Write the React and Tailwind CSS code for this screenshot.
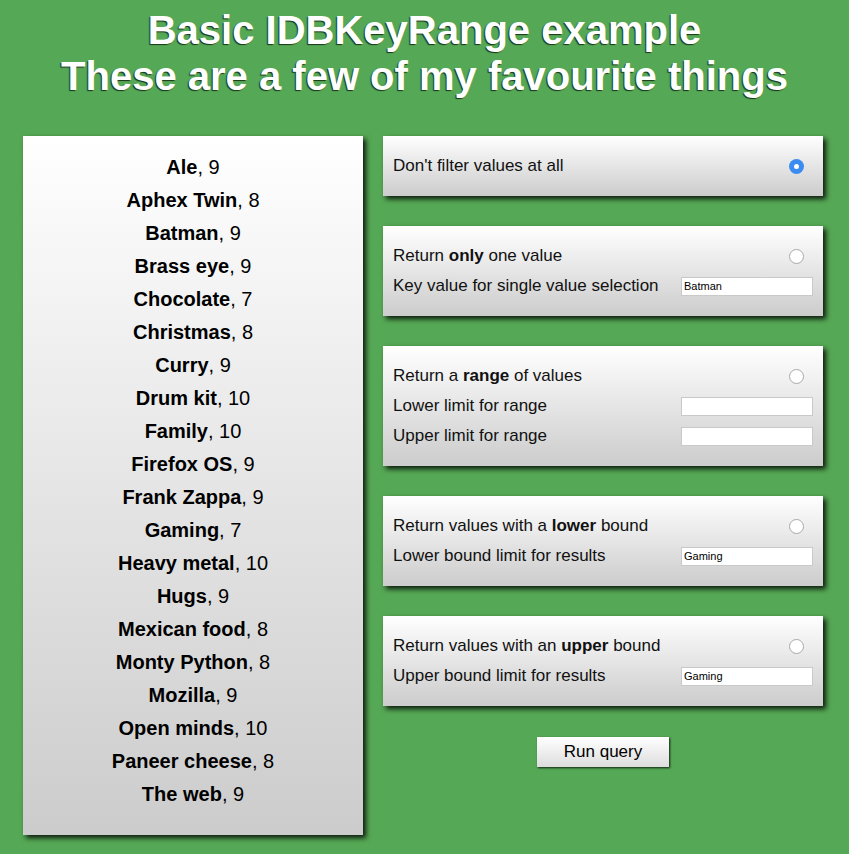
import React from "react";

const things = [
  ["Ale", 9],
  ["Aphex Twin", 8],
  ["Batman", 9],
  ["Brass eye", 9],
  ["Chocolate", 7],
  ["Christmas", 8],
  ["Curry", 9],
  ["Drum kit", 10],
  ["Family", 10],
  ["Firefox OS", 9],
  ["Frank Zappa", 9],
  ["Gaming", 7],
  ["Heavy metal", 10],
  ["Hugs", 9],
  ["Mexican food", 8],
  ["Monty Python", 8],
  ["Mozilla", 9],
  ["Open minds", 10],
  ["Paneer cheese", 8],
  ["The web", 9],
];

function Radio({ checked }) {
  if (checked) {
    return (
      <span className="flex h-[15px] w-[15px] items-center justify-center rounded-full bg-[#3b8cf0]">
        <span className="h-[5px] w-[5px] rounded-full bg-white" />
      </span>
    );
  }
  return <span className="block h-[15px] w-[15px] rounded-full border border-[#a9a9a9] bg-white" />;
}

function Field({ value }) {
  return (
    <div className="flex h-[19px] w-[132px] items-center border border-[#c9c9c9] bg-white px-[2px] text-[11px] leading-none text-black">
      {value}
    </div>
  );
}

function Row({ children, right }) {
  return (
    <div className="flex h-[30px] items-center justify-between">
      <div className="text-[17px] text-[#111]">{children}</div>
      {right}
    </div>
  );
}

function Panel({ children }) {
  return (
    <div className="w-[440px] bg-gradient-to-b from-white to-[#cccccc] px-[10px] py-[15px] shadow-[3px_3px_5px_rgba(0,0,0,0.85)]">
      {children}
    </div>
  );
}

const radioWrap = "mr-[9px]";

export default function App() {
  return (
    <div
      className="min-h-[854px] bg-[#55a855] pb-[18px]"
      style={{ fontFamily: '"Liberation Sans", Arial, sans-serif' }}
    >
      <h1 className="pt-[7px] text-center text-[40px] font-bold leading-[46px] text-white [text-shadow:-1px_1px_1px_rgba(0,0,0,0.7)]">
        Basic IDBKeyRange example
        <br />
        These are a few of my favourite things
      </h1>
      <div className="mt-[37px] flex items-start gap-[20px] pl-[23px]">
        <ul className="flex h-[699px] w-[340px] flex-col bg-gradient-to-b from-white to-[#cccccc] pt-[14px] text-center text-[20px] text-black shadow-[3px_3px_5px_rgba(0,0,0,0.85)]">
          {things.map(([name, n]) => (
            <li key={name} className="flex h-[33px] items-center justify-center">
              <span>
                <strong>{name}</strong>, {n}
              </span>
            </li>
          ))}
        </ul>
        <div className="flex flex-col items-center gap-[30px]">
          <Panel>
            <Row right={<span className={radioWrap}><Radio checked /></span>}>
              Don't filter values at all
            </Row>
          </Panel>
          <Panel>
            <Row right={<span className={radioWrap}><Radio /></span>}>
              Return <strong>only</strong> one value
            </Row>
            <Row right={<Field value="Batman" />}>Key value for single value selection</Row>
          </Panel>
          <Panel>
            <Row right={<span className={radioWrap}><Radio /></span>}>
              Return a <strong>range</strong> of values
            </Row>
            <Row right={<Field value="" />}>Lower limit for range</Row>
            <Row right={<Field value="" />}>Upper limit for range</Row>
          </Panel>
          <Panel>
            <Row right={<span className={radioWrap}><Radio /></span>}>
              Return values with a <strong>lower</strong> bound
            </Row>
            <Row right={<Field value="Gaming" />}>Lower bound limit for results</Row>
          </Panel>
          <Panel>
            <Row right={<span className={radioWrap}><Radio /></span>}>
              Return values with an <strong>upper</strong> bound
            </Row>
            <Row right={<Field value="Gaming" />}>Upper bound limit for results</Row>
          </Panel>
          <button className="mt-[1px] flex h-[30px] w-[132px] items-center justify-center bg-gradient-to-b from-white to-[#dddddd] text-[17px] text-black shadow-[1px_1px_2px_rgba(0,0,0,0.8)]">
            Run query
          </button>
        </div>
      </div>
    </div>
  );
}
